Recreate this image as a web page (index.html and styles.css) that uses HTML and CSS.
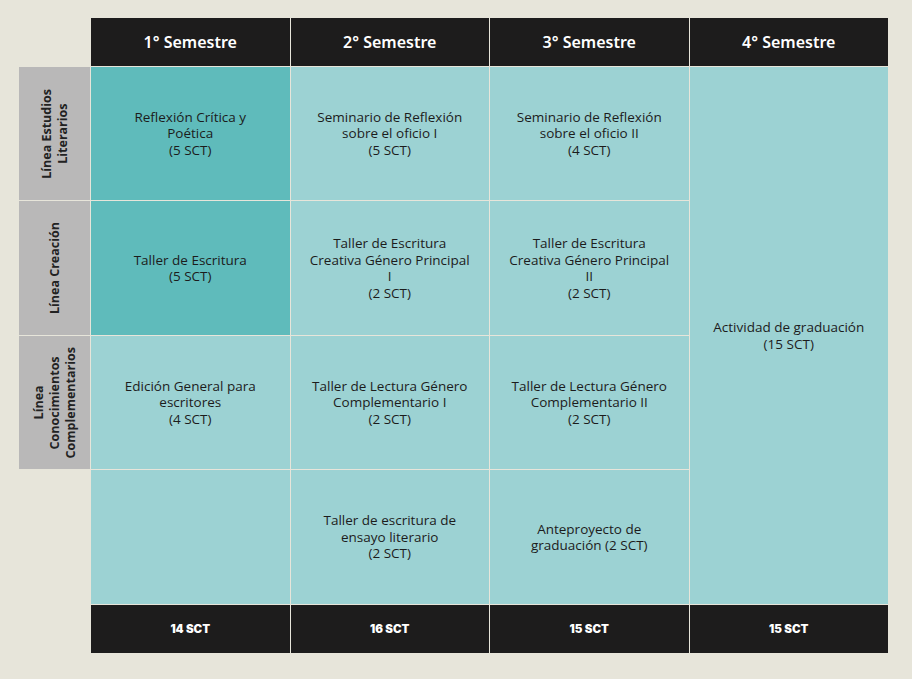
FILE: index.html
```html
<!DOCTYPE html>
<html lang="es">
<head>
<meta charset="utf-8">
<title>Malla curricular</title>
<link rel="stylesheet" href="styles.css">
</head>
<body>
<div class="grid">
  <div class="corner"></div>
  <div class="head">1° Semestre</div>
  <div class="head">2° Semestre</div>
  <div class="head">3° Semestre</div>
  <div class="head">4° Semestre</div>

  <div class="label"><span>Línea Estudios<br>Literarios</span></div>
  <div class="cell dark">Reflexión Crítica y<br>Poética<br>(5 SCT)</div>
  <div class="cell">Seminario de Reflexión<br>sobre el oficio I<br>(5 SCT)</div>
  <div class="cell">Seminario de Reflexión<br>sobre el oficio II<br>(4 SCT)</div>
  <div class="cell span4">Actividad de graduación<br>(15 SCT)</div>

  <div class="label"><span>Línea Creación</span></div>
  <div class="cell dark">Taller de Escritura<br>(5 SCT)</div>
  <div class="cell">Taller de Escritura<br>Creativa Género Principal<br>I<br>(2 SCT)</div>
  <div class="cell">Taller de Escritura<br>Creativa Género Principal<br>II<br>(2 SCT)</div>

  <div class="label"><span>Línea<br>Conocimientos<br>Complementarios</span></div>
  <div class="cell">Edición General para<br>escritores<br>(4 SCT)</div>
  <div class="cell">Taller de Lectura Género<br>Complementario I<br>(2 SCT)</div>
  <div class="cell">Taller de Lectura Género<br>Complementario II<br>(2 SCT)</div>

  <div class="corner"></div>
  <div class="cell"></div>
  <div class="cell">Taller de escritura de<br>ensayo literario<br>(2 SCT)</div>
  <div class="cell">Anteproyecto de<br>graduación (2 SCT)</div>

  <div class="corner"></div>
  <div class="foot">14 SCT</div>
  <div class="foot">16 SCT</div>
  <div class="foot">15 SCT</div>
  <div class="foot">15 SCT</div>
</div>
</body>
</html>
```
FILE: styles.css
```css
html, body {
  margin: 0;
  padding: 0;
  background: #e7e5da;
}
body {
  padding: 18px 0 0 19px;
  font-family: "Open Sans", "Noto Sans", sans-serif;
  color: #1c1c1c;
}
.grid {
  width: 869px;
  display: grid;
  grid-template-columns: 71px repeat(4, 1fr);
  grid-template-rows: 48px 133px 134px 133px 134px 48px;
  gap: 1px;
}
.head {
  background: #1d1c1c;
  color: #fff;
  font-family: "Noto Sans", sans-serif;
  font-weight: 600;
  font-size: 16px;
  display: flex;
  align-items: center;
  justify-content: center;
}
.label {
  background: #b9b8b8;
  display: flex;
  align-items: center;
  justify-content: center;
}
.label span {
  writing-mode: vertical-rl;
  transform: rotate(180deg);
  text-align: center;
  font-weight: 700;
  font-size: 12.5px;
  line-height: 16px;
  color: #222;
}
.cell {
  background: #9cd2d3;
  display: flex;
  align-items: center;
  justify-content: center;
  text-align: center;
  font-size: 13.5px;
  line-height: 16.5px;
}
.cell.dark {
  background: #5fbbbb;
}
.span4 {
  grid-column: 5;
  grid-row: 2 / span 4;
}
.foot {
  background: #1d1c1c;
  color: #fff;
  font-family: Inter, sans-serif;
  font-weight: 900;
  font-size: 11.5px;
  display: flex;
  align-items: center;
  justify-content: center;
}
```
